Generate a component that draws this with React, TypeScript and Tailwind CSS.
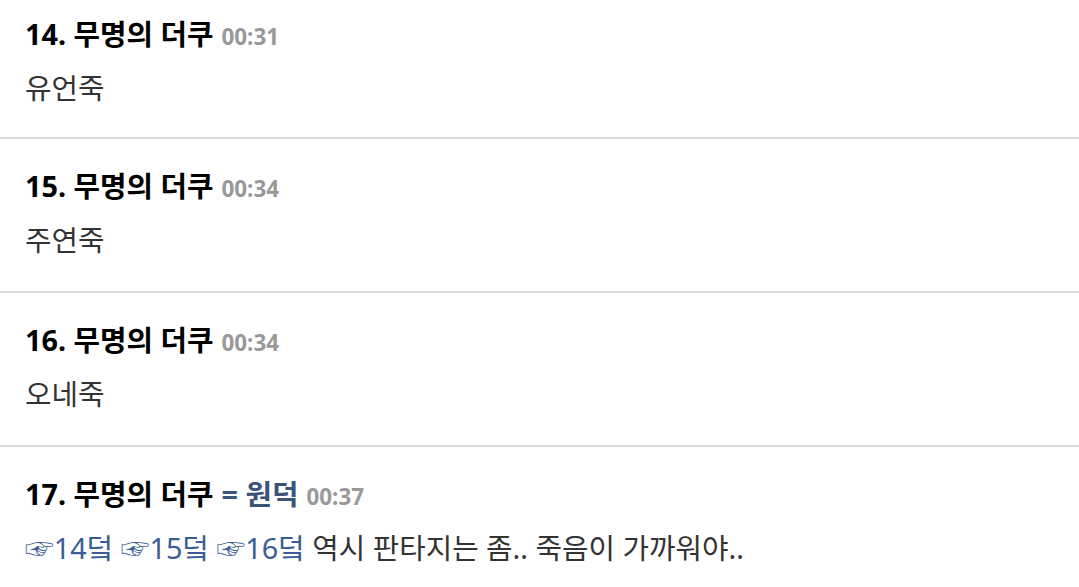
import React from 'react';

type Reply = {
  no: number;
  time: string;
  alias?: string;
  body: React.ReactNode;
};

const replies: Reply[] = [
  { no: 14, time: '00:31', body: '유언죽' },
  { no: 15, time: '00:34', body: '주연죽' },
  { no: 16, time: '00:34', body: '오네죽' },
  {
    no: 17,
    time: '00:37',
    alias: '원덕',
    body: (
      <>
        <a className="text-[#3a5d96]">☞14덬</a> <a className="text-[#3a5d96]">☞15덬</a>{' '}
        <a className="text-[#3a5d96]">☞16덬</a> 역시 판타지는 좀.. 죽음이 가까워야..
      </>
    ),
  },
];

export default function App() {
  return (
    <div
      className="w-[1079px] h-[587px] overflow-hidden bg-white"
      style={{ fontFamily: '"Noto Sans", "Noto Sans CJK KR", "DejaVu Sans", sans-serif' }}
    >
      {replies.map((r, i) => (
        <div
          key={r.no}
          className={
            i === 0
              ? 'px-[25px] pt-[16px] pb-[31px] border-b-2 border-[#dddddd]'
              : 'px-[25px] pt-[29px] pb-[33px] border-b-2 border-[#dddddd]'
          }
        >
          <div className="flex items-baseline h-[36px] leading-[36px]">
            <span className="text-[28.8px] font-bold text-black">
              {r.no}. 무명의 더쿠
            </span>
            {r.alias && (
              <span className="ml-[8px] text-[28.8px] font-bold text-[#3b5378]">= {r.alias}</span>
            )}
            <span className="ml-[8px] text-[22.4px] font-bold text-[#999999]">{r.time}</span>
          </div>
          <p className="mt-[18px] h-[36px] leading-[36px] text-[28.8px] text-[#333333]">{r.body}</p>
        </div>
      ))}
    </div>
  );
}
